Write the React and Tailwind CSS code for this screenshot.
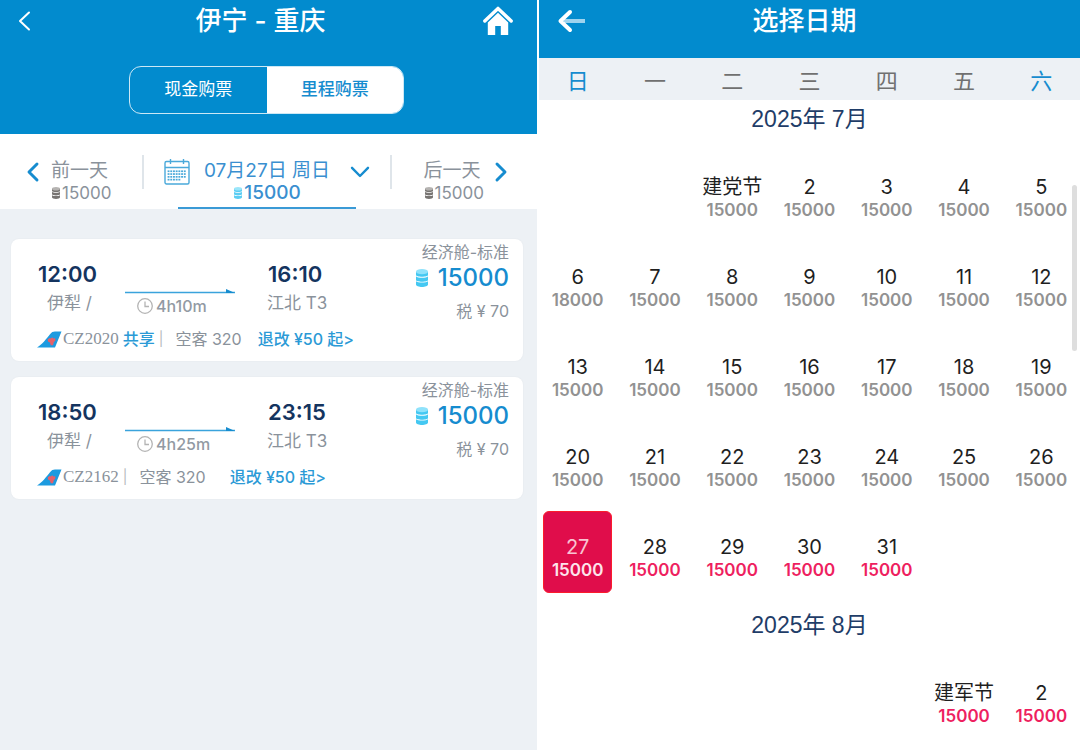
import React, { useState } from 'react';
import { ChevronLeft, ChevronRight } from 'lucide-react';

const flights = [
    { id: 'CZ2020', depart: '12:00', from: '伊犁 /', arrive: '16:10', to: '江北 T3', duration: '4h10m', shared: true, plane: '空客 320', change: '退改 ¥50 起>', price: '15000', tax: '税 ¥ 70' },
    { id: 'CZ2162', depart: '18:50', from: '伊犁 /', arrive: '23:15', to: '江北 T3', duration: '4h25m', shared: false, plane: '空客 320', change: '退改 ¥50 起>', price: '15000', tax: '税 ¥ 70' },
];

const weekdays = ['日', '一', '二', '三', '四', '五', '六'];

const months = [
    { title: '2025年 7月', key: '7', offset: 2, days: 31, holiday: '建党节' },
    { title: '2025年 8月', key: '8', offset: 5, days: 2, holiday: '建军节' },
];

function Coins({ className, top, body }) {
    return (
        <svg viewBox="0 0 12 18" className={className} aria-hidden="true">
            <path d="M0 12.3c1.5 1.7 10.5 1.7 12 0v3.2c0 3.3-12 3.3-12 0z" fill={body} />
            <path d="M0 7.3c1.5 2 10.5 2 12 0v3.6c0 2.3-12 2.3-12 0z" fill={body} />
            <path d="M0 2.7h12v3.2c0 2.3-12 2.3-12 0z" fill={body} />
            <ellipse cx="6" cy="2.7" rx="6" ry="2.6" fill={top} />
        </svg>
    );
}

function HomeIcon() {
    return (
        <svg viewBox="0 0 30 30" className="h-[30px] w-[30px]" aria-hidden="true">
            <path d="M1.8 15 15 2.4 28.2 15" fill="none" stroke="#fff" strokeWidth="3.4" strokeLinecap="round" strokeLinejoin="round" />
            <path d="M15 6.8 25.200 16.500V29h-7.400v-9h-5.600v9H4.800V16.500z" fill="#fff" />
        </svg>
    );
}

function CalendarIcon() {
    const dots = [];
    for (let row = 0; row < 4; row++) {
        for (let col = 0; col < 7; col++) {
            if (row === 3 && col > 4) continue;
            dots.push(<rect key={`${row}-${col}`} x={3.6 + col * 2.7} y={11.4 + row * 2.8} width="1.9" height="1.7" />);
        }
    }
    return (
        <svg viewBox="0 0 26 26" className="h-[26px] w-[26px] shrink-0" fill="#4aa9da" aria-hidden="true">
            <rect x="1" y="2.5" width="24" height="22.5" rx="1.5" fill="none" stroke="#4aa9da" strokeWidth="1.4" />
            <path d="M1 8.5h24M6.500 0v5M19.500 0v5" stroke="#4aa9da" strokeWidth="1.4" />
            {dots}
        </svg>
    );
}

function TailLogo() {
    return (
        <svg viewBox="0 0 25 17" className="h-[17px] w-[25px] shrink-0" aria-hidden="true">
            <path d="M0 16.5C5 13.5 9.5 7.500 13 3.200 14.6 1.2 16 .5 18 .5h6.500L18 16.500z" fill="#1c9be0" />
            <path d="M10.800 8.200l1.900-1.200 1.200.6 1.200-1.300 1.300 1.100 1.800-.2.200 2.300-1.600 1.800-.8 2.900h-2.200l-.9-2.600-1.900-1.200z" fill="#e5606a" />
        </svg>
    );
}

function FlightCard({ flight }) {
    return (
        <article className="flex rounded-lg bg-white pr-[14px] pl-[26px] shadow-[0_0_2px_rgba(0,0,0,0.05)]">
            <div className="flex-1 pt-[21px] pb-[10px]">
                <div className="flex items-end">
                    <div className="w-[88px]">
                        <div className="pl-px text-[22px] leading-[28px] font-semibold text-[#14345f]">{flight.depart}</div>
                        <div className="pl-[10px] text-[17px] leading-[30px] text-[#8a929b]">{flight.from}</div>
                    </div>
                    <div className="w-[110px]">
                        <svg viewBox="0 0 110 6" className="block h-[6px] w-full" aria-hidden="true">
                            <path d="M0 4.500h110" stroke="#3aa3dc" strokeWidth="1.4" />
                            <path d="M101 1v4h9z" fill="#168ccf" />
                        </svg>
                        <div className="flex items-center gap-[3px] pl-3 text-base leading-[24px] font-medium text-[#929aa3]">
                            <svg viewBox="0 0 16 16" className="h-4 w-4" fill="none" stroke="#b4b4b4" strokeWidth="1.3" aria-hidden="true">
                                <circle cx="8" cy="8" r="7.3" />
                                <path d="M8 3.500v5h4" />
                            </svg>
                            {flight.duration}
                        </div>
                    </div>
                    <div className="ml-[32px]">
                        <div className="pl-px text-[22px] leading-[28px] font-semibold text-[#14345f]">{flight.arrive}</div>
                        <div className="text-[17px] leading-[30px] text-[#8a929b]">{flight.to}</div>
                    </div>
                </div>
                <div className="mt-[9px] flex items-center text-base leading-[24px] whitespace-nowrap text-[#8a929b]">
                    <TailLogo />
                    <span className="ml-px font-['Liberation_Serif',serif] text-[17px]">{flight.id}</span>
                    {flight.shared && <span className="ml-1 font-medium text-[#2b9ad6]">共享</span>}
                    <span className="ml-1 text-sm text-[#b5b9be]">|</span>
                    <span className="ml-3">{flight.plane}</span>
                    <a href="#rules" className={`font-medium text-[#2b9ad6] ${flight.shared ? 'ml-4' : 'ml-6'}`}>{flight.change}</a>
                </div>
            </div>
            <div className="shrink-0 pt-[2px] text-right text-base leading-[22px] text-[#8a929b]">
                <div>经济舱-标准</div>
                <div className="flex items-center justify-end gap-[10px] text-2xl leading-[30px] font-medium text-[#168ccf]">
                    <Coins className="h-[18px] w-3" top="#8fe2fb" body="#44c8f2" />
                    {flight.price}
                </div>
                <div className="mt-[7px]">{flight.tax}</div>
            </div>
        </article>
    );
}

function FlightPanel() {
    const [payment, setPayment] = useState('miles');
    const tab = (name) =>
        payment === name ? 'bg-white font-medium text-[#168ccf]' : 'text-white';

    return (
        <section className="border-r-2 border-white bg-[#edf1f5]">
            <header className="bg-[#028bce] pb-5 text-white">
                <div className="flex h-[42px] items-center justify-between pr-6 pl-3">
                    <button type="button" aria-label="返回">
                        <svg viewBox="0 0 26 26" className="h-[26px] w-[26px]" fill="none" stroke="currentColor" strokeWidth="2" strokeLinecap="round" strokeLinejoin="round" aria-hidden="true">
                            <path d="M17 4.500 8 13l9 8.500" />
                        </svg>
                    </button>
                    <h1 className="text-[26px] leading-[32px] font-medium">伊宁 - 重庆</h1>
                    <button type="button" aria-label="首页">
                        <HomeIcon />
                    </button>
                </div>
                <div className="mt-6 flex justify-center pr-1">
                    <div className="flex h-12 w-[275px] overflow-hidden rounded-xl border border-white/80 text-[17px]">
                        <button type="button" onClick={() => setPayment('cash')} className={`flex-1 ${tab('cash')}`}>现金购票</button>
                        <button type="button" onClick={() => setPayment('miles')} className={`flex-1 ${tab('miles')}`}>里程购票</button>
                    </div>
                </div>
            </header>

            {/* Date switcher */}
            <nav className="flex h-[75px] items-center bg-white text-[#8a929b]">
                <button type="button" className="flex w-[142px] items-center gap-[2px] pl-[17px]">
                    <ChevronLeft className="h-8 w-8 text-[#168ccf]" strokeWidth={2.2} />
                    <span className="pt-5 text-left">
                        <span className="block text-[19px] leading-[22px]">前一天</span>
                        <span className="flex items-center gap-px text-[17px] leading-[22px]">
                            <Coins className="h-3 w-[10px]" top="#b5b3b1" body="#777472" />15000
                        </span>
                    </span>
                </button>
                <span className="h-[34px] w-[2px] bg-[#dfe5ea]" />
                <button type="button" className="relative flex h-full flex-1 items-center justify-between px-5 text-[#3a8fd0]">
                    <span className="flex items-center gap-[14px]">
                        <CalendarIcon />
                        <span className="pt-5 whitespace-nowrap">
                            <span className="block text-[19px] leading-[22px]">07月27日 周日</span>
                            <span className="flex items-center justify-center gap-px text-[19px] leading-[22px] font-medium">
                                <Coins className="h-3 w-[10px]" top="#9be6fa" body="#5bcdf3" />15000
                            </span>
                        </span>
                    </span>
                    <svg viewBox="0 0 20 12" className="h-3 w-5" fill="none" stroke="#168ccf" strokeWidth="2.4" strokeLinecap="round" strokeLinejoin="round" aria-hidden="true">
                        <path d="M2 1.800 10 10l8-8.200" />
                    </svg>
                    <span className="absolute right-[34px] bottom-0 left-[34px] h-[2px] bg-[#3a9ad6]" />
                </button>
                <span className="h-[34px] w-[2px] bg-[#dfe5ea]" />
                <button type="button" className="flex w-[145px] items-center justify-end gap-px pr-5">
                    <span className="pt-5 text-left">
                        <span className="block text-[19px] leading-[22px]">后一天</span>
                        <span className="flex items-center gap-px text-[17px] leading-[22px]">
                            <Coins className="h-3 w-[10px]" top="#b5b3b1" body="#777472" />15000
                        </span>
                    </span>
                    <ChevronRight className="h-8 w-8 text-[#168ccf]" strokeWidth={2.2} />
                </button>
            </nav>

            <main className="flex flex-col gap-4 pt-[30px] pr-[14px] pl-[11px]">
                {flights.map((flight) => (
                    <FlightCard key={flight.id} flight={flight} />
                ))}
            </main>
        </section>
    );
}

function DayButton({ label, price, offer, selected, onClick }) {
    const box = selected ? 'rounded-md border-[#fb1c2c] bg-[#e00d4b] text-[#f9c3d2]' : 'border-transparent text-[#1f1f1f]';
    const priceColor = selected ? 'text-[#fde4eb]' : offer ? 'text-[#ee1f5f]' : 'text-[#929292]';
    return (
        <button type="button" onClick={onClick} className={`mx-1 flex h-[82px] flex-col items-center justify-end border pb-[10px] whitespace-nowrap ${box}`}>
            <span className="text-xl leading-[24px]">{label}</span>
            <span className={`text-[17px] leading-[23px] font-semibold ${priceColor}`}>{price}</span>
        </button>
    );
}

function CalendarPanel() {
    const [selected, setSelected] = useState('7-27');

    return (
        <section className="relative bg-white">
            <header className="flex h-[58px] items-start bg-[#028bce] text-white">
                <button type="button" aria-label="返回" className="mt-[9px] ml-[18px] w-[28px]">
                    <svg viewBox="0 0 28 24" className="h-6 w-7" fill="none" strokeLinecap="round" strokeLinejoin="round" aria-hidden="true">
                        <path d="M7 12h21" stroke="#9fd3ee" strokeWidth="4" strokeLinecap="butt" />
                        <path d="M13 3 3.500 12l9.500 9" stroke="#fff" strokeWidth="4" />
                    </svg>
                </button>
                <h2 className="mt-[5px] mr-[56px] flex-1 text-center text-[26px] leading-[32px] font-medium">选择日期</h2>
            </header>
            <div className="grid h-[42px] grid-cols-7 items-center bg-[#edf1f5] pt-1 text-center text-[22px] text-[#707070]">
                {weekdays.map((day, i) => (
                    <span key={day} className={i === 0 || i === 6 ? 'text-[#168ccf]' : ''}>{day}</span>
                ))}
            </div>

            {months.map((month) => (
                <div key={month.key} className="mb-[13px]">
                    <h3 className="mb-3 text-center font-['Liberation_Sans','Noto_Sans_CJK_SC',sans-serif] text-[23px] leading-[39px] text-[#1f3d68]">{month.title}</h3>
                    <div className="grid grid-cols-7 gap-y-2">
                        {Array.from({ length: month.offset }, (_, i) => <span key={`blank-${i}`} />)}
                        {Array.from({ length: month.days }, (_, i) => {
                            const day = i + 1;
                            const id = `${month.key}-${day}`;
                            return (
                                <DayButton
                                    key={id}
                                    label={day === 1 ? month.holiday : day}
                                    price={id === '7-6' ? '18000' : '15000'}
                                    offer={month.key === '8' || day >= 27}
                                    selected={selected === id}
                                    onClick={() => setSelected(id)}
                                />
                            );
                        })}
                    </div>
                </div>
            ))}

            {/* Scroll indicator */}
            <div className="absolute top-[185px] right-[3px] h-[166px] w-[5px] rounded-full bg-[#dedede]" />
        </section>
    );
}

export default function App() {
    return (
        <div className="grid min-h-screen grid-cols-[539fr_541fr] font-[Inter,'Noto_Sans_CJK_SC',sans-serif]">
            <FlightPanel />
            <CalendarPanel />
        </div>
    );
}
